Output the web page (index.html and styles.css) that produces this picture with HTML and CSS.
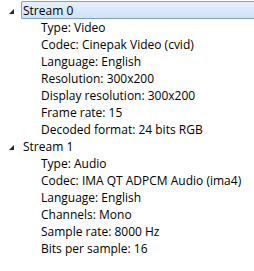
FILE: index.html
```html
<!DOCTYPE html>
<html lang="en">
<head>
    <meta charset="UTF-8">
    <title>Streams</title>
    <link rel="stylesheet" href="styles.css">
</head>
<body>

<ul class="tree">
    <li class="node">
        <div class="row selected">
            <span class="arrow"></span>
            <span class="label">Stream 0</span>
        </div>
        <ul class="children">
            <li class="row leaf">Type: Video</li>
            <li class="row leaf">Codec: Cinepak Video (cvid)</li>
            <li class="row leaf">Language: English</li>
            <li class="row leaf">Resolution: 300x200</li>
            <li class="row leaf">Display resolution: 300x200</li>
            <li class="row leaf">Frame rate: 15</li>
            <li class="row leaf">Decoded format: 24 bits RGB</li>
        </ul>
    </li>
    <li class="node">
        <div class="row">
            <span class="arrow"></span>
            <span class="label">Stream 1</span>
        </div>
        <ul class="children">
            <li class="row leaf">Type: Audio</li>
            <li class="row leaf">Codec: IMA QT ADPCM Audio (ima4)</li>
            <li class="row leaf">Language: English</li>
            <li class="row leaf">Channels: Mono</li>
            <li class="row leaf">Sample rate: 8000 Hz</li>
            <li class="row leaf">Bits per sample: 16</li>
        </ul>
    </li>
</ul>

</body>
</html>
```
FILE: styles.css
```css
body {
    margin: 0;
    background: #fff;
    font-family: "Open Sans", "Noto Sans", sans-serif;
    font-size: 12px;
    color: #000;
}
.tree, .children {
    list-style: none;
    margin: 0;
    padding: 0;
}
.tree {
    padding-top: 1px;
}
.row {
    height: 17px;
    line-height: 19px;
    display: flex;
    align-items: flex-start;
    white-space: nowrap;
}
.leaf {
    padding-left: 41px;
}
.arrow {
    width: 21px;
    height: 17px;
    position: relative;
    flex: none;
}
.arrow::after {
    content: "";
    position: absolute;
    left: 9px;
    top: 8px;
    border-style: solid;
    border-width: 0 0 5px 5px;
    border-color: transparent transparent #262626 transparent;
}
.label {
    padding-left: 2px;
    flex: 1;
}
.selected .label {
    height: 16px;
    line-height: 17px;
    border: 1px solid #7da2ce;
    border-right: none;
    border-radius: 2px 0 0 2px;
    padding-left: 1px;
    background: linear-gradient(#e6f0fc, #cfe2fb);
}
```
